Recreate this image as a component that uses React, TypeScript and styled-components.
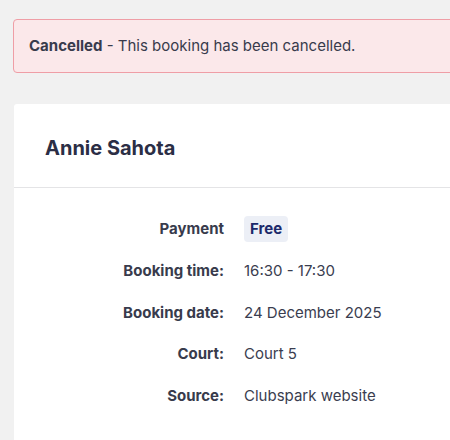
import { Fragment } from 'react';
import styled, { createGlobalStyle } from 'styled-components';

const GlobalStyle = createGlobalStyle`
  html, body {
    margin: 0;
    padding: 0;
    background: #f1f1f1;
    overflow: hidden;
  }
  body {
    font-family: Inter, "Noto Sans", sans-serif;
    color: #33364a;
  }
`;

const StyledPage = styled.div`
  display: flex;
  flex-direction: column;
  width: 620px;
  padding: 19px 0 0 13px;
  gap: 31px;
`;

const StyledAlert = styled.div`
  background: #fbe8ea;
  border: 1px solid #ef9ea6;
  border-radius: 4px;
  padding: 15px 15px;
  font-size: 15px;
  line-height: 22px;
  color: #383b4c;

  strong {
    font-weight: 700;
  }
`;

const StyledCard = styled.div`
  display: flex;
  flex-direction: column;
  margin-left: 1px;
  background: white;
  border-radius: 3px;
  min-height: 400px;
`;

const StyledCardHeader = styled.div`
  padding: 30px 31px 25px;
  border-bottom: 1px solid #e4e4e6;
`;

const StyledName = styled.h2`
  margin: 0;
  font-size: 20px;
  line-height: 28px;
  font-weight: 700;
  color: #2b2e45;
`;

const StyledDetails = styled.div`
  display: grid;
  grid-template-columns: 180px 1fr;
  column-gap: 20px;
  padding: 20px 30px;
`;

const StyledLabel = styled.div`
  display: flex;
  align-items: center;
  justify-content: flex-end;
  height: 41.7px;
  font-size: 15px;
  font-weight: 700;
  color: #383b4c;
`;

const StyledValue = styled.div`
  display: flex;
  align-items: center;
  height: 41.7px;
  font-size: 15px;
  color: #3a3d4f;
`;

const StyledBadge = styled.span`
  display: inline-block;
  padding: 3px 6px;
  border-radius: 4px;
  background: #eceff6;
  color: #1c2a6b;
  font-weight: 700;
  font-size: 15px;
  line-height: 20px;
`;

const details: { label: string; value: string; badge?: boolean }[] = [
  { label: 'Payment', value: 'Free', badge: true },
  { label: 'Booking time:', value: '16:30 - 17:30' },
  { label: 'Booking date:', value: '24 December 2025' },
  { label: 'Court:', value: 'Court 5' },
  { label: 'Source:', value: 'Clubspark website' },
];

const App = () => {
  return (
    <>
      <GlobalStyle />
      <StyledPage>
        <StyledAlert>
          <strong>Cancelled</strong> - This booking has been cancelled.
        </StyledAlert>
        <StyledCard>
          <StyledCardHeader>
            <StyledName>Annie Sahota</StyledName>
          </StyledCardHeader>
          <StyledDetails>
            {details.map((d) => (
              <Fragment key={d.label}>
                <StyledLabel>{d.label}</StyledLabel>
                <StyledValue>
                  {d.badge ? <StyledBadge>{d.value}</StyledBadge> : d.value}
                </StyledValue>
              </Fragment>
            ))}
          </StyledDetails>
        </StyledCard>
      </StyledPage>
    </>
  );
};

export default App;
